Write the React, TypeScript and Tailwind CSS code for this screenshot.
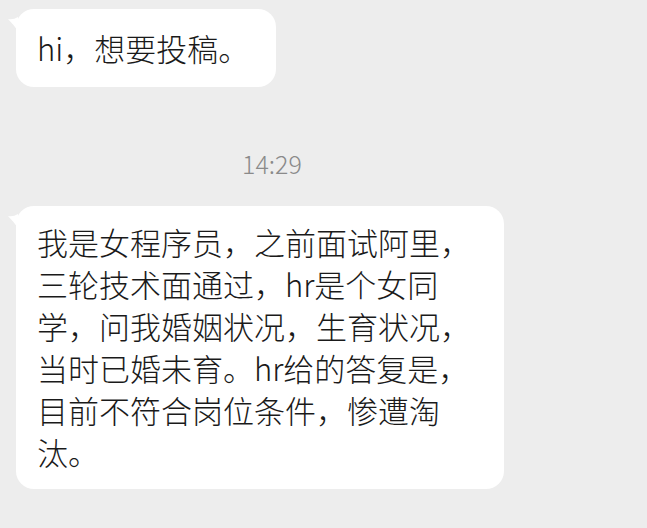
import React from 'react';

interface Message {
  lines: string[];
  width: string;
}

const font = { fontFamily: '"Noto Sans CJK SC", "Noto Sans", sans-serif' };

const Tail: React.FC = () => (
  <svg
    className="absolute left-[-8px] top-[7px]"
    width="10"
    height="16"
    viewBox="0 0 10 16"
  >
    <path d="M10 1 L10 15 Q5 8 0 3 Q5 4 10 1 Z" fill="#ffffff" />
  </svg>
);

const Bubble: React.FC<{ msg: Message }> = ({ msg }) => (
  <div className={`relative bg-white rounded-[18px] px-[21px] py-[18px] ${msg.width}`}>
    <Tail />
    {msg.lines.map((line, i) => (
      <div key={i} className="text-[31px] leading-[42px] font-light text-[#1a1a1a] whitespace-nowrap">
        {line}
      </div>
    ))}
  </div>
);

export default function App() {
  const first: Message = { lines: ['hi，想要投稿。'], width: 'w-[260px]' };
  const second: Message = {
    lines: [
      '我是女程序员，之前面试阿里，',
      '三轮技术面通过，hr是个女同',
      '学，问我婚姻状况，生育状况，',
      '当时已婚未育。hr给的答复是，',
      '目前不符合岗位条件，惨遭淘',
      '汰。',
    ],
    width: 'w-[488px] !py-[15px] !pb-[16px]',
  };

  return (
    <div className="w-[647px] h-[528px] bg-[#ededed] overflow-hidden pl-4 pt-[9px]" style={font}>
      <Bubble msg={first} />
      <div className="w-[512px] text-center text-[25px] leading-[28px] font-light text-[#8a8a8a] mt-[62px]">
        14:29
      </div>
      <div className="mt-[29px]">
        <Bubble msg={second} />
      </div>
    </div>
  );
}
